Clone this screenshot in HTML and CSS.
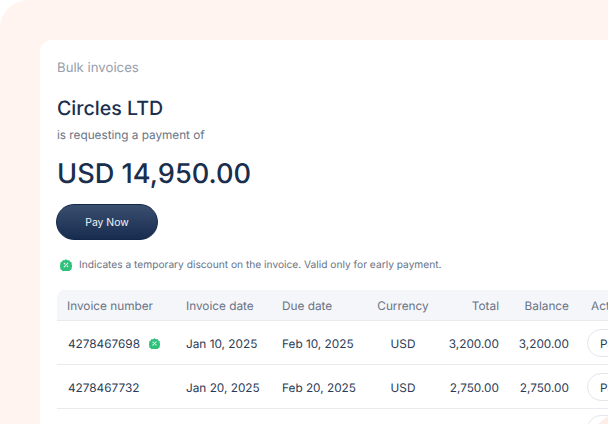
FILE: index.html
```html
<!DOCTYPE html>
<html lang="en">
<head>
<meta charset="utf-8">
<title>Bulk invoices</title>
<link rel="stylesheet" href="styles.css">
</head>
<body>
<div class="backdrop">
  <main class="card">
    <p class="crumb">Bulk invoices</p>
    <h1 class="company">Circles LTD</h1>
    <p class="sub">is requesting a payment of</p>
    <p class="amount">USD 14,950.00</p>
    <button class="pay">Pay Now</button>
    <p class="note">
      <svg class="badge" viewBox="0 0 12 12"><path fill="#2fc07c" d="M6 .3l1.5 1 1.8-.1.8 1.6 1.6.8-.1 1.8 1 1.6-1 1.5.1 1.8-1.6.8-.8 1.6-1.8-.1-1.5 1-1.5-1-1.8.1-.8-1.6-1.6-.8.1-1.8-1-1.5 1-1.6-.1-1.8 1.6-.8.8-1.6 1.8.1z"/><path stroke="#e3f6ec" stroke-width="1.1" stroke-linecap="round" d="M4.2 7.8l3.6-3.6"/><circle cx="4.5" cy="4.6" r=".8" fill="#e3f6ec"/><circle cx="7.5" cy="7.4" r=".8" fill="#e3f6ec"/></svg>
      Indicates a temporary discount on the invoice. Valid only for early payment.
    </p>
    <div class="table">
      <div class="row head">
        <span class="c-num">Invoice number</span><span class="c-date">Invoice date</span><span class="c-due">Due date</span><span class="c-cur">Currency</span><span class="c-total">Total</span><span class="c-bal">Balance</span><span class="c-act">Action</span>
      </div>
      <div class="row">
        <span class="c-num num-badge">4278467698<svg class="badge small" viewBox="0 0 12 12"><path fill="#2fc07c" d="M6 .3l1.5 1 1.8-.1.8 1.6 1.6.8-.1 1.8 1 1.6-1 1.5.1 1.8-1.6.8-.8 1.6-1.8-.1-1.5 1-1.5-1-1.8.1-.8-1.6-1.6-.8.1-1.8-1-1.5 1-1.6-.1-1.8 1.6-.8.8-1.6 1.8.1z"/><path stroke="#e3f6ec" stroke-width="1.1" stroke-linecap="round" d="M4.2 7.8l3.6-3.6"/><circle cx="4.5" cy="4.6" r=".8" fill="#e3f6ec"/><circle cx="7.5" cy="7.4" r=".8" fill="#e3f6ec"/></svg></span><span class="c-date">Jan 10, 2025</span><span class="c-due">Feb 10, 2025</span><span class="c-cur">USD</span><span class="c-total">3,200.00</span><span class="c-bal">3,200.00</span><span class="c-act"><span class="pill">Pay</span></span>
      </div>
      <div class="row">
        <span class="c-num num-plain">4278467732</span><span class="c-date">Jan 20, 2025</span><span class="c-due">Feb 20, 2025</span><span class="c-cur">USD</span><span class="c-total">2,750.00</span><span class="c-bal">2,750.00</span><span class="c-act"><span class="pill">Pay</span></span>
      </div>
      <div class="row">
        <span class="c-num"></span><span class="c-date"></span><span class="c-due"></span><span class="c-cur"></span><span class="c-total"></span><span class="c-bal"></span><span class="c-act"><span class="pill pill-empty"></span></span>
      </div>
    </div>
  </main>
</div>
<svg class="corner-mark" viewBox="0 0 12 8"><path fill="#fdeee7" d="M2 8L12 0v8z"/></svg>
</body>
</html>
```
FILE: styles.css
```css
html, body { margin: 0; height: 100%; background: #fff; overflow: hidden; }
body { font-family: Inter, "Liberation Sans", sans-serif; color: #1a2e4e; text-rendering: geometricPrecision; }
.backdrop { width: 680px; height: 424px; background: #fff4ef; border-radius: 28px 28px 0 0; padding: 40px 0 0 40px; box-sizing: border-box; overflow: hidden; }
.card { width: 640px; height: 500px; background: #fff; border-radius: 12px 0 0 0; padding: 18px 0 0 17px; box-sizing: border-box; }
p, h1 { margin: 0; }
.crumb { font-size: 13.2px; line-height: 20px; color: #98a0ae; }
.company { font-size: 19.6px; font-weight: 500; line-height: 28px; margin-top: 16px; color: #1a2e4e; }
.sub { font-size: 11.75px; line-height: 16px; margin-top: 5px; color: #697386; }
.amount { font-size: 27.2px; font-weight: 500; line-height: 36px; margin-top: 13px; }
.pay { display: block; width: 102px; height: 36px; margin: 12px 0 0 -1px; border: 1px solid #12284a; border-radius: 18px; background: linear-gradient(#3a4f70, #172c4e); color: #f2f4f7; font: 400 10.4px Inter, sans-serif; }
.note { display: flex; align-items: center; gap: 7px; margin-top: 17px; margin-left: 3px; font-size: 10.2px; line-height: 16px; color: #697386; }
.badge { width: 12px; height: 12px; flex: none; }
.badge.small { width: 11px; height: 11px; }
.table { width: 600px; margin-top: 17px; font-size: 11.8px; }
.row { display: flex; align-items: center; box-sizing: border-box; height: 44px; padding-top: 2px; border-bottom: 1px solid #e9ebef; color: #2c3b55; }
.head { height: 31px; background: #f5f6fa; border-radius: 8px 0 0 0; color: #697386; }
.row > span { box-sizing: border-box; flex: none; white-space: nowrap; }
.c-num { width: 129px; padding-left: 10px; }
.num-badge { display: flex; align-items: center; gap: 9px; padding-left: 11px; }
.row > .num-plain { padding-left: 11px; }
.c-date { width: 96px; }
.c-due { width: 84px; }
.c-cur { width: 74px; text-align: center; }
.c-total { width: 59px; text-align: right; }
.c-bal { width: 70px; text-align: right; }
.c-act { width: 80px; padding-left: 18px; margin-top: -2px; }
.head .c-act { padding-left: 22px; margin-top: 0; }
.pill { display: inline-block; width: 60px; height: 28px; line-height: 28px; border: 1px solid #e4e6ec; border-radius: 14px; padding-left: 12px; box-sizing: border-box; }
.corner-mark { position: absolute; right: 0; bottom: 0; width: 12px; height: 8px; }
```
